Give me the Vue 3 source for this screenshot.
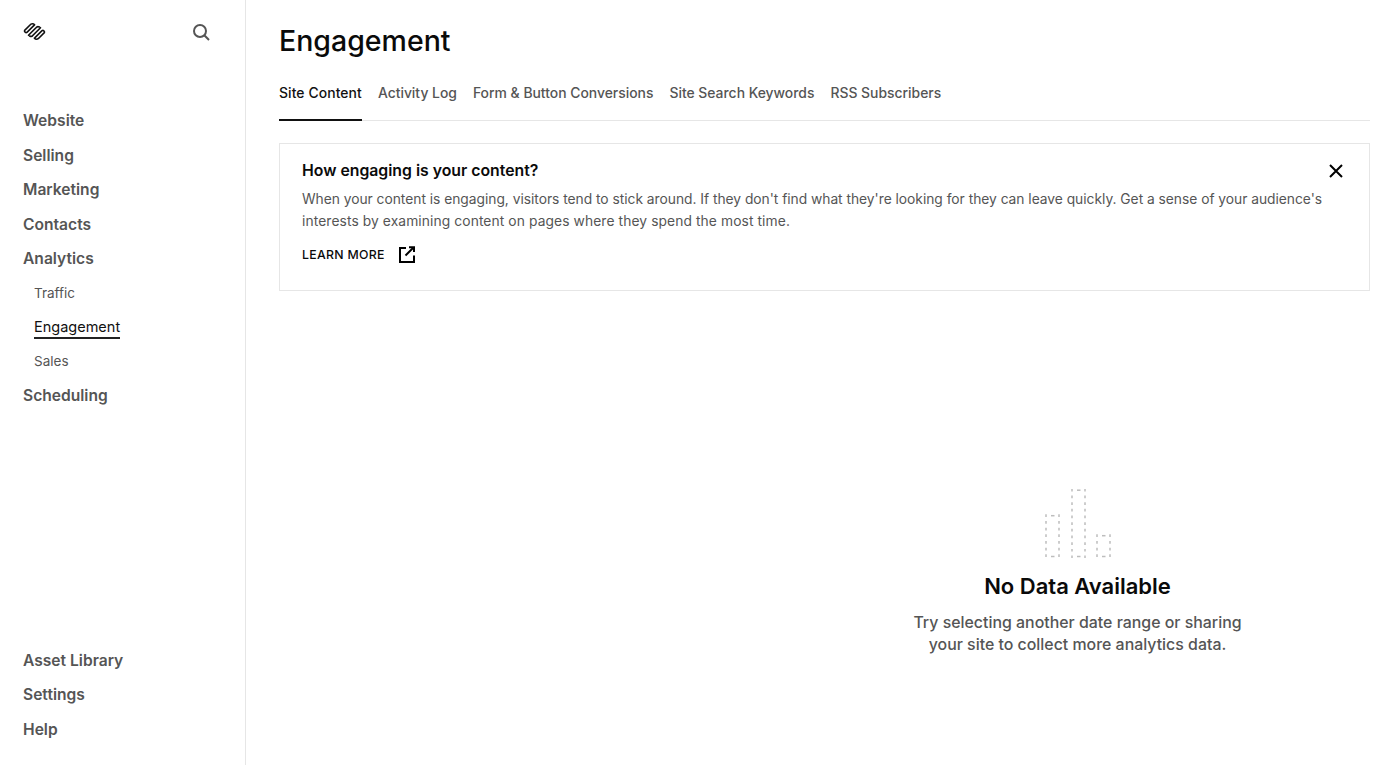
<script setup>
const topNav = ['Website', 'Selling', 'Marketing', 'Contacts', 'Analytics']
const subNav = ['Traffic', 'Engagement', 'Sales']
const bottomNav = ['Asset Library', 'Settings', 'Help']
const tabs = ['Site Content', 'Activity Log', 'Form & Button Conversions', 'Site Search Keywords', 'RSS Subscribers']
const bars = [
  { left: 2, right: 15, top: 26.7 },
  { left: 28, right: 41, top: 1.2 },
  { left: 53, right: 66, top: 46.7 }
]
</script>

<template>
  <div class="page">
    <aside class="side">
      <div class="side-top">
        <svg class="logo" width="23" height="19" viewBox="0 0 23 19" fill="none" stroke="#111" stroke-width="1.600" stroke-linecap="round">
          <path d="M11 3.400 4 10.400A1.700 1.700 0 0 1 1.600 8.400L7 3A3 3 0 0 1 11.600 2.800" />
          <path d="M5.500 13.300 13 5.800A2.600 2.600 0 0 1 16.400 5" />
          <path d="M12 15.600 19 8.600A1.700 1.700 0 0 1 21.400 10.600L16 16A3 3 0 0 1 11.400 16.200" />
          <path d="M17.500 5.700 10 13.200A2.600 2.600 0 0 1 6.600 14" />
        </svg>
        <svg class="search" width="18" height="18" viewBox="0 0 18 18" fill="none" stroke="#555" stroke-width="2">
          <circle cx="8" cy="8" r="6" />
          <path d="M12.300 12.300 17 17" />
        </svg>
      </div>
      <nav class="nav">
        <a v-for="item in topNav" :key="item" class="nav-item">{{ item }}</a>
        <div class="sub">
          <a v-for="item in subNav" :key="item" class="sub-item">
            <span :class="{ current: item === 'Engagement' }">{{ item }}</span>
          </a>
        </div>
        <a class="nav-item">Scheduling</a>
      </nav>
      <nav class="nav bottom">
        <a v-for="item in bottomNav" :key="item" class="nav-item">{{ item }}</a>
      </nav>
    </aside>
    <main class="main">
      <h1 class="title">Engagement</h1>
      <div class="tabs">
        <a v-for="(tab, i) in tabs" :key="tab" class="tab" :class="{ active: i === 0 }">{{ tab }}</a>
      </div>
      <section class="card">
        <h2 class="card-title">How engaging is your content?</h2>
        <p class="card-text">When your content is engaging, visitors tend to stick around. If they don't find what they're looking for they can leave quickly. Get a sense of your audience's<br /><span class="second">interests by examining content on pages where they spend the most time.</span></p>
        <a class="learn">
          <span>LEARN MORE</span>
          <svg width="16" height="17" viewBox="0 0 16 17" fill="none" stroke="#000" stroke-width="2">
            <path d="M7 2H1v14h14V9.500" />
            <path d="M6.500 9.500 14 2" />
            <path d="M10 1.200h5V6" />
          </svg>
        </a>
        <svg class="close" width="14" height="14" viewBox="0 0 14 14" stroke="#000" stroke-width="2" fill="none">
          <path d="M1 1 13 13M13 1 1 13" />
        </svg>
      </section>
      <section class="empty">
        <svg class="chart" width="68" height="70" viewBox="0 0 68 70" fill="none" stroke="#bdbdbd" stroke-width="1.500">
          <g v-for="b in bars" :key="b.left">
            <line :x1="b.left" :x2="b.left" :y1="b.top - 1.35" y2="69" stroke-dasharray="2.700 3.970" />
            <line :x1="b.right" :x2="b.right" :y1="b.top - 1.35" y2="69" stroke-dasharray="2.700 3.970" />
            <line :x1="b.left + 5" :x2="b.left + 8.500" :y1="b.top" :y2="b.top" />
            <line :x1="b.left + 5" :x2="b.left + 8.500" y1="67.500" y2="67.500" />
          </g>
        </svg>
        <h2 class="empty-title">No Data Available</h2>
        <p class="empty-text">Try selecting another date range or sharing<br />your site to collect more analytics data.</p>
      </section>
    </main>
  </div>
</template>

<style>
html, body { margin: 0; background: #fff; }
</style>

<style scoped>
.page {
  display: flex;
  height: 765px;
  overflow: hidden;
  font-family: Inter, "Liberation Sans", sans-serif;
  color: #555;
}
.side {
  width: 246px;
  flex: none;
  border-right: 1px solid #e6e6e6;
  display: flex;
  flex-direction: column;
  padding: 0 0 18px 23px;
  box-sizing: border-box;
}
.side-top {
  height: 104px;
  display: flex;
  justify-content: space-between;
  align-items: flex-start;
  padding: 23px 35px 0 0;
  box-sizing: border-box;
}
.logo { margin-top: -1px; }
.nav { display: flex; flex-direction: column; }
.bottom { margin-top: auto; }
.nav-item {
  height: 34.500px;
  line-height: 34.500px;
  font-size: 15.600px;
  font-weight: 600;
  color: #555;
}
.sub { display: flex; flex-direction: column; margin: -1px 0 1px; }
.sub-item {
  height: 34px;
  line-height: 34px;
  padding-left: 11px;
  font-size: 13.500px;
  font-weight: 400;
  color: #555;
}
.current {
  display: inline-block;
  line-height: 20px;
  font-size: 14.500px;
  color: #111;
  border-bottom: 2px solid #222;
}
.main {
  flex: 1;
  min-width: 0;
  padding: 0 22px 0 33px;
}
.title {
  margin: 0;
  padding-top: 22px;
  height: 39px;
  line-height: 38px;
  font-size: 28.500px;
  font-weight: 500;
  color: #0a0a0a;
}
.tabs {
  display: flex;
  gap: 16px;
  height: 60px;
  border-bottom: 1px solid #e6e6e6;
  box-sizing: border-box;
}
.tab {
  height: 60px;
  padding-top: 21px;
  line-height: 22px;
  font-size: 13.900px;
  font-weight: 500;
  color: #555;
  box-sizing: border-box;
}
.tab.active {
  color: #111;
  letter-spacing: 0.1px;
  border-bottom: 2px solid #111;
}
.card {
  position: relative;
  margin-top: 22px;
  height: 148px;
  box-sizing: border-box;
  border: 1px solid #e6e6e6;
  padding: 17px 22px 16px;
}
.card-title {
  margin: 0;
  font-size: 15.800px;
  line-height: 20px;
  font-weight: 600;
  color: #0a0a0a;
}
.card-text {
  margin: 7px 0 0;
  font-size: 13.800px;
  line-height: 22px;
  letter-spacing: -0.02px;
  color: #555;
}
.second { letter-spacing: 0.1px; }
.learn {
  display: flex;
  align-items: center;
  gap: 14px;
  margin-top: 14px;
  font-size: 12.300px;
  font-weight: 500;
  color: #0a0a0a;
  letter-spacing: 0.3px;
}
.close { position: absolute; top: 20px; right: 26px; }
.empty {
  display: flex;
  flex-direction: column;
  align-items: center;
  margin-top: 198px;
  margin-left: 506px;
}
.empty-title {
  margin: 12px 0 0;
  font-size: 22px;
  line-height: 30px;
  font-weight: 600;
  color: #0a0a0a;
}
.empty-text {
  margin: 11px 0 0;
  font-size: 15.900px;
  line-height: 22px;
  font-weight: 500;
  text-align: center;
  color: #555;
  white-space: nowrap;
}
</style>
